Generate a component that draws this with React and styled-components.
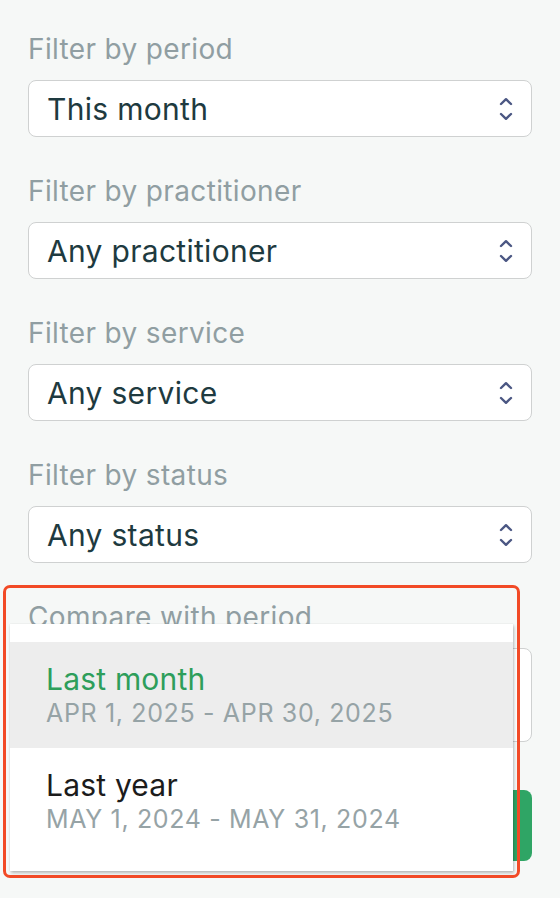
import styled, { createGlobalStyle } from "styled-components";

const GlobalStyle = createGlobalStyle`
  html, body {
    margin: 0;
    padding: 0;
    background: #f6f8f7;
    font-family: Inter, "Noto Sans", sans-serif;
  }
`;

const filters = [
  { label: "Filter by period", value: "This month" },
  { label: "Filter by practitioner", value: "Any practitioner" },
  { label: "Filter by service", value: "Any service" },
  { label: "Filter by status", value: "Any status" },
];

const options = [
  { name: "Last month", range: "APR 1, 2025 - APR 30, 2025", active: true },
  { name: "Last year", range: "MAY 1, 2024 - MAY 31, 2024" },
];

const Chevrons = () => (
  <svg width="14" height="24" viewBox="0 0 14 24" fill="none">
    <path d="M2 7 L7 2.2 L12 7" stroke="#4b5783" strokeWidth="2.4" strokeLinecap="round" strokeLinejoin="round" />
    <path d="M2 17 L7 21.8 L12 17" stroke="#4b5783" strokeWidth="2.4" strokeLinecap="round" strokeLinejoin="round" />
  </svg>
);

const App = () => {
  return (
    <Page>
      <GlobalStyle />
      {filters.map((f) => (
        <Field key={f.label}>
          <Label>{f.label}</Label>
          <SelectBox>
            <Value>{f.value}</Value>
            <Chevrons />
          </SelectBox>
        </Field>
      ))}
      <Field>
        <Label>Compare with period</Label>
        <SelectBox $tall>
          <Value>Last month</Value>
          <Chevrons />
        </SelectBox>
        <Popover>
          {options.map((o) => (
            <Option key={o.name} $active={o.active}>
              <OptionName $active={o.active}>{o.name}</OptionName>
              <OptionRange>{o.range}</OptionRange>
            </Option>
          ))}
        </Popover>
      </Field>
      <ApplyButton>Apply</ApplyButton>
      <Highlight />
    </Page>
  );
};

const Page = styled.div`
  position: relative;
  width: 560px;
  min-height: 898px;
  box-sizing: border-box;
  padding: 32px 28px 0 28px;
  display: flex;
  flex-direction: column;
  gap: 37px;
`;

const Field = styled.div`
  position: relative;
  display: flex;
  flex-direction: column;
  gap: 14px;
`;

const Label = styled.div`
  font-size: 28px;
  line-height: 34px;
  letter-spacing: 0.35px;
  color: #909ea2;
`;

const SelectBox = styled.div`
  height: ${(p) => (p.$tall ? "94px" : "57px")};
  box-sizing: border-box;
  border: 1.5px solid #cfd1d1;
  border-radius: 8px;
  background: #fff;
  display: flex;
  align-items: center;
  justify-content: space-between;
  padding: 0 18px 0 18px;
`;

const Value = styled.span`
  font-size: 30px;
  letter-spacing: 0.3px;
  color: #1e3a40;
`;

const ApplyButton = styled.button`
  margin-top: 11px;
  height: 71px;
  border: none;
  border-radius: 8px;
  background: #2fa565;
  color: #fff;
  font-family: inherit;
  font-size: 28px;
  font-weight: 600;
`;

const Popover = styled.div`
  position: absolute;
  left: -18px;
  top: 24px;
  width: 503px;
  box-sizing: border-box;
  padding: 18px 0 17px;
  background: #fff;
  box-shadow: 1px 2px 3px rgba(0, 0, 0, 0.25), 0 0 1px rgba(0, 0, 0, 0.12);
`;

const Option = styled.div`
  height: 106px;
  box-sizing: border-box;
  padding: 19px 36px 0;
  background: ${(p) => (p.$active ? "#ededed" : "#fff")};
`;

const OptionName = styled.div`
  font-size: 30px;
  line-height: 36px;
  letter-spacing: 0.2px;
  color: ${(p) => (p.$active ? "#2e9e5b" : "#1c1c1c")};
`;

const OptionRange = styled.div`
  font-size: 25px;
  line-height: 33px;
  letter-spacing: 0.65px;
  color: #96a3a6;
`;

const Highlight = styled.div`
  position: absolute;
  left: 3px;
  top: 585px;
  width: 517px;
  height: 293px;
  box-sizing: border-box;
  border: 3px solid #f24a26;
  border-radius: 7px;
  pointer-events: none;
`;

export default App;
